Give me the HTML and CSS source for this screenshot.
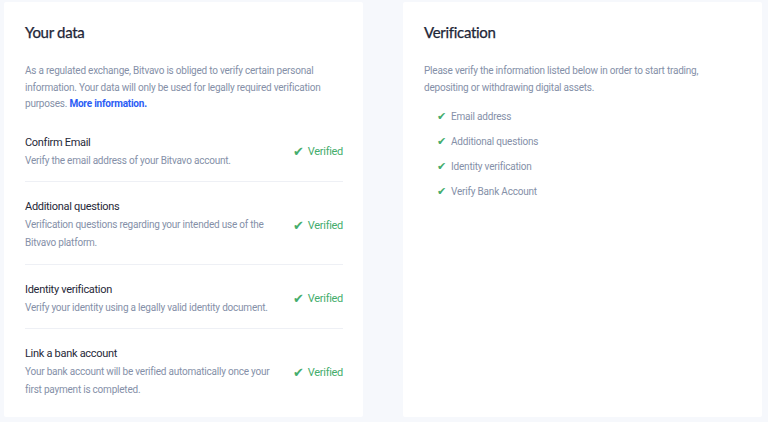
FILE: index.html
```html
<!DOCTYPE html>
<html>
<head>
<meta charset="utf-8">
<link rel="stylesheet" href="styles.css">
</head>
<body>
<div class="page">
  <section class="card">
    <h2 class="card-title">Your data</h2>
    <p class="intro">As a regulated exchange, Bitvavo is obliged to verify certain personal information. Your data will only be used for legally required verification purposes. <a class="more" href="#">More information.</a></p>
    <div class="steps">
      <div class="step">
        <div class="step-text">
          <div class="step-name">Confirm Email</div>
          <div class="step-desc">Verify the email address of your Bitvavo account.</div>
        </div>
        <div class="status"><span class="tick">✔</span>Verified</div>
      </div>
      <div class="step">
        <div class="step-text">
          <div class="step-name">Additional questions</div>
          <div class="step-desc">Verification questions regarding your intended use of the Bitvavo platform.</div>
        </div>
        <div class="status"><span class="tick">✔</span>Verified</div>
      </div>
      <div class="step">
        <div class="step-text">
          <div class="step-name">Identity verification</div>
          <div class="step-desc">Verify your identity using a legally valid identity document.</div>
        </div>
        <div class="status"><span class="tick">✔</span>Verified</div>
      </div>
      <div class="step">
        <div class="step-text">
          <div class="step-name">Link a bank account</div>
          <div class="step-desc">Your bank account will be verified automatically once your first payment is completed.</div>
        </div>
        <div class="status"><span class="tick">✔</span>Verified</div>
      </div>
    </div>
  </section>
  <section class="card">
    <h2 class="card-title">Verification</h2>
    <p class="intro">Please verify the information listed below in order to start trading, depositing or withdrawing digital assets.</p>
    <ul class="checklist">
      <li><span class="tick">✔</span>Email address</li>
      <li><span class="tick">✔</span>Additional questions</li>
      <li><span class="tick">✔</span>Identity verification</li>
      <li><span class="tick">✔</span>Verify Bank Account</li>
    </ul>
  </section>
</div>
</body>
</html>
```
FILE: styles.css
```css
html, body {
  margin: 0;
  padding: 0;
  background: #f6f8fc;
}
body {
  font-family: Roboto, "Liberation Sans", sans-serif;
  width: 768px;
  height: 422px;
  overflow: hidden;
}
.page {
  display: grid;
  grid-template-columns: 359px 359px;
  column-gap: 40px;
  padding: 2px 0 0 4px;
}
.card {
  background: #ffffff;
  height: 415px;
  padding: 0 20px 0 21px;
  box-sizing: border-box;
  border-radius: 2px;
}
.card-title {
  margin: 0;
  padding-top: 19px;
  height: 22px;
  line-height: 22px;
  font-family: Lato, "Noto Sans", sans-serif;
  font-weight: 400;
  font-size: 15px;
  letter-spacing: -0.3px;
  color: #1e2637;
  -webkit-text-stroke: 0.25px #1e2637;
}
.intro {
  margin: 20px 0 0;
  font-size: 10px;
  letter-spacing: -0.22px;
  line-height: 16.5px;
  color: #8590a8;
}
.more {
  color: #2b5cf5;
  font-weight: 700;
  text-decoration: none;
}
.steps {
  margin-top: 5px;
}
.step {
  display: flex;
  align-items: center;
  justify-content: space-between;
  padding: 16px 0 11.5px;
  border-bottom: 1px solid #eef0f5;
}
.step:last-child {
  border-bottom: none;
}
.step-text {
  width: 252px;
}
.step-name {
  font-size: 11px;
  letter-spacing: -0.3px;
  line-height: 18px;
  color: #1f2838;
}
.step-desc {
  font-size: 10px;
  letter-spacing: -0.22px;
  line-height: 18px;
  color: #8590a8;
}
.status {
  display: flex;
  align-items: center;
  font-size: 11px;
  letter-spacing: -0.3px;
  color: #44ad6c;
  white-space: nowrap;
}
.status .tick {
  font-size: 12.5px;
  margin-right: 4px;
}
.tick {
  color: #44ad6c;
}
.checklist {
  list-style: none;
  margin: 8px 0 0;
  padding: 0 0 0 13px;
}
.checklist li {
  display: flex;
  align-items: center;
  height: 25px;
  font-size: 10px;
  letter-spacing: -0.2px;
  color: #8590a8;
}
.checklist .tick {
  width: 14px;
  font-size: 11px;
}
```
